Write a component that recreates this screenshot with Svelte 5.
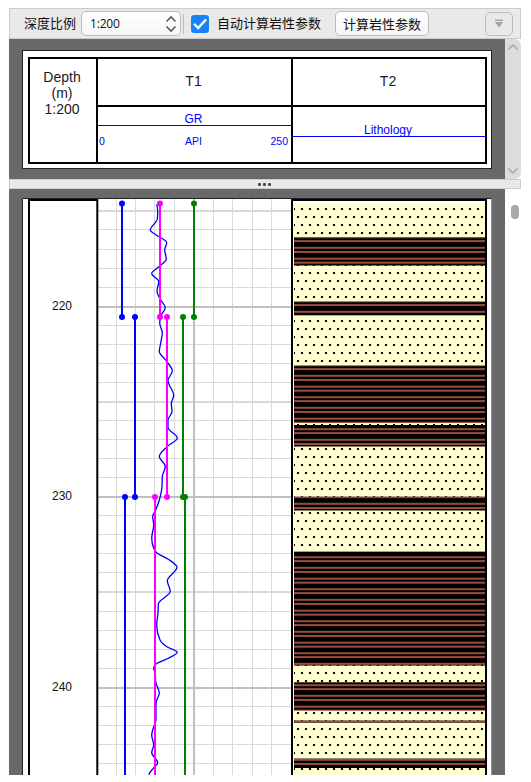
<script lang="ts">
  // Well log viewer: toolbar, track header, depth plot
  const TOP = 198;
  const BOTTOM = 775;

  let autoCalc = $state(true);

  const gridX = [116, 135, 154, 174, 213, 232, 252, 271];
  const gridY = [
    229, 249, 268, 287, 325, 344, 363, 382, 420, 439, 458, 477,
    515, 534, 553, 572, 611, 630, 649, 668, 706, 725, 744, 763,
  ];
  const midY = [210, 401, 591];
  const majors = [
    { y: 306, depth: 220 },
    { y: 496, depth: 230 },
    { y: 687, depth: 240 },
  ];

  // [top, bottom] of each shale bed, sand everywhere else
  const shale = [
    [237, 265.5],
    [301.3, 315.5],
    [365.3, 423],
    [425, 446.5],
    [496.5, 510.5],
    [551.5, 665.5],
    [682.3, 710.7],
    [720.3, 722.7],
    [758.5, 768],
  ];

  // line tops inside the 32px shale tile
  const shaleRows = [1, 7.7, 11.7, 18.2, 22.1, 28.8];

  // GR samples
  const gr = [
    [157, 204], [157.7, 212], [157.3, 219], [150.3, 230], [157, 235.5], [166.7, 242.5],
    [164.7, 250], [166.3, 259], [158.5, 267], [151.7, 273.5], [158.7, 281.5], [157, 291.5],
    [160.7, 300], [165.3, 307.5], [161, 315.5], [159.7, 323], [162.3, 333], [160.7, 343],
    [159.3, 351.5], [166, 360.5], [172.3, 371], [168, 380.5], [173.7, 395.5], [171.3, 403.5],
    [172, 411.5], [168, 420], [168, 427.5], [177.3, 438], [167.3, 446.5], [159.3, 456.5],
    [165.3, 466.5], [162.3, 476.5], [162, 486.5], [159.3, 500], [155.7, 510], [152.7, 516.5],
    [153.7, 525], [151.7, 538], [154, 549], [156.7, 552.7], [168.3, 559.3], [177, 567.3],
    [167.3, 580.7], [170.3, 591.3], [158.3, 604], [158, 613], [156.7, 625], [160, 640],
    [166.5, 646.5], [177.3, 652.3], [167.3, 658.7], [156, 664], [153.7, 668.3], [155.3, 674],
    [155.7, 681.7], [159.3, 693.3], [156.3, 701.7], [156, 708], [156, 720], [154, 726],
    [151.7, 735], [153.7, 745], [151.7, 752.7], [157.7, 762.7], [153.3, 768.3], [149, 774.7],
  ];

  // monotone in depth: no overshoot, vertical tangent at each peak
  function slope(p: number[][], i: number) {
    if (i === 0 || i === p.length - 1) return 0;
    const h0 = p[i][1] - p[i - 1][1];
    const h1 = p[i + 1][1] - p[i][1];
    const s0 = (p[i][0] - p[i - 1][0]) / h0;
    const s1 = (p[i + 1][0] - p[i][0]) / h1;
    if (s0 * s1 <= 0) return 0;
    const mean = (s0 * h1 + s1 * h0) / (h0 + h1);
    return Math.sign(s0) * Math.min(2 * Math.abs(s0), 2 * Math.abs(s1), Math.abs(mean));
  }

  function smooth(p: number[][]) {
    let d = `M${p[0]}`;
    for (let i = 0; i < p.length - 1; i++) {
      const [x0, y0] = p[i];
      const [x1, y1] = p[i + 1];
      const h = (y1 - y0) / 3;
      d += `C${x0 + slope(p, i) * h} ${y0 + h} ${x1 - slope(p, i + 1) * h} ${y1 - h} ${x1} ${y1}`;
    }
    return d;
  }

  const segments = [
    { x: 122, y1: 203.5, y2: 317, color: "#0000ff" },
    { x: 135, y1: 317, y2: 497, color: "#0000ff" },
    { x: 125, y1: 497, y2: 790, color: "#0000ff" },
    { x: 160, y1: 203.5, y2: 317, color: "#ff00ff" },
    { x: 167, y1: 317, y2: 497, color: "#ff00ff" },
    { x: 155, y1: 497, y2: 790, color: "#ff00ff" },
    { x: 194, y1: 203.5, y2: 317, color: "#008000" },
    { x: 183, y1: 317, y2: 497, color: "#008000" },
    { x: 185, y1: 497, y2: 790, color: "#008000" },
  ];
</script>

<div class="viewer">
  <div class="toolbar">
    <span class="label">深度比例</span>
    <button class="select">
      <span>1:200</span>
      <svg width="12" height="18" viewBox="0 0 12 18">
        <path d="M1.5 6.5L6 2L10.5 6.5M1.5 11.5L6 16L10.5 11.5" />
      </svg>
    </button>
    <i class="sep"></i>
    <button class="check" aria-label="toggle" onclick={() => (autoCalc = !autoCalc)}>
      {#if autoCalc}
        <svg width="18" height="18" viewBox="0 0 18 18"><path d="M3 8.8L7.2 13L15 4.5" /></svg>
      {/if}
    </button>
    <span class="label auto">自动计算岩性参数</span>
    <button class="calc">计算岩性参数</button>
    <button class="more" aria-label="more">
      <svg width="10" height="10" viewBox="0 0 10 10"><path d="M1 .5H9V2H1ZM1 3H9L5 8.5Z" /></svg>
    </button>
  </div>

  <div class="head">
    <div class="dark">
      <div class="sheet">
        <div class="tracks">
          <div class="depth">Depth<br />(m)<br />1:200</div>
          <div class="track t1">
            <div class="title">T1</div>
            <div class="curve">GR</div>
            <div class="range"><span>0</span><span>API</span><span>250</span></div>
          </div>
          <div class="track t2">
            <div class="title">T2</div>
            <div class="curve">Lithology</div>
          </div>
        </div>
      </div>
    </div>
    <div class="scroll">
      <svg width="10" height="6" viewBox="0 0 10 6"><path d="M.5 5.5L5 1L9.5 5.5" /></svg>
      <svg width="10" height="6" viewBox="0 0 10 6"><path d="M.5 .5L5 5L9.5 .5" /></svg>
    </div>
  </div>

  <div class="splitter"><i></i><i></i><i></i></div>

  <div class="body">
    <svg class="plot" width="496" height="586" viewBox="9 189 496 586">
      <defs>
        <pattern id="sand" width="8" height="16" patternUnits="userSpaceOnUse">
          <rect width="8" height="16" fill="#ffffd2" />
          <rect x="5" y="0" width="2" height="2" />
          <rect x="1" y="8" width="2" height="2" />
        </pattern>
        <pattern id="shale" y="570" width="8" height="32" patternUnits="userSpaceOnUse">
          <rect width="8" height="32" />
          {#each shaleRows as y}
            <rect {y} width="8" height="2" fill="#984d3c" />
          {/each}
        </pattern>
      </defs>

      <rect x="22" y={TOP} width="470.5" height="600" fill="#fff" />
      <path d="M22.5 790V198.5H492V790" class="edge" />

      <g shape-rendering="crispEdges">
        {#each gridX as x}
          <rect {x} y="199" width="1" height="576" fill="#dadada" />
        {/each}
        {#each gridY as y}
          <rect x="98" {y} width="193" height="1" fill="#dadada" />
        {/each}
        {#each midY as y}
          <rect x="98" {y} width="193" height="2" fill="#d8d8d8" />
        {/each}
        <rect x="193" y="199" width="2" height="576" fill="#c0c0c0" />
        {#each majors as m}
          <rect x="98" y={m.y} width="193" height="2" fill="#c0c0c0" />
        {/each}
      </g>

      <rect x="294" y="203.5" width="191.5" height={BOTTOM - 203} fill="url(#sand)" />
      {#each shale as [y1, y2]}
        <rect x="294" y={y1} width="191.5" height={y2 - y1} fill="url(#shale)" />
      {/each}

      <path d="M29 790V200H97.3V790M292 790V200H486V790" class="frame" />

      <path d={smooth(gr)} class="gr" />
      {#each segments as s}
        <rect x={s.x - 1} y={s.y1} width="2" height={s.y2 - s.y1} fill={s.color} />
        <circle cx={s.x} cy={s.y1} r="3" fill={s.color} />
        <circle cx={s.x} cy={s.y2} r="3" fill={s.color} />
      {/each}

      {#each majors as m}
        <text x="62" y={m.y + 4} class="tick">{m.depth}</text>
      {/each}
    </svg>
    <div class="vbar"><i></i></div>
  </div>
</div>

<style>
  :global(body) {
    background: #fff;
  }
  .viewer {
    box-sizing: border-box;
    width: 531px;
    height: 782px;
    padding: 8px 10px 7px 9px;
    overflow: hidden;
    font-family: "Liberation Sans", "Noto Sans CJK SC", sans-serif;
    color: #1a1a1a;
  }
  .toolbar {
    box-sizing: border-box;
    display: flex;
    align-items: center;
    width: 512px;
    height: 31px;
    padding-left: 14px;
    padding-right: 7px;
    background: #e9e9e9;
    border: 1px solid #ccc;
  }
  .label,
  .calc,
  .select {
    font: 13px/18px "Noto Sans CJK SC", sans-serif;
    white-space: nowrap;
    color: #111;
  }
  .label {
    padding-bottom: 1px;
  }
  button {
    box-sizing: border-box;
    margin: 0;
    padding: 0;
    border: 1px solid #bdbdbd;
    border-radius: 5px;
    background: linear-gradient(#fff, #f5f5f5);
  }
  .select {
    display: flex;
    align-items: center;
    justify-content: space-between;
    width: 100px;
    height: 25px;
    margin-left: 5px;
    padding: 0 3px 0 8px;
  }
  .select span {
    font-family: "Open Sans", sans-serif;
    font-size: 12px;
    letter-spacing: -0.2px;
  }
  .select path {
    fill: none;
    stroke: #606060;
    stroke-width: 1.7;
  }
  .sep {
    width: 1px;
    height: 20px;
    margin-left: 2px;
    background: #bbb;
  }
  .check {
    width: 18px;
    height: 18px;
    margin-left: 7px;
    border: 0;
    border-radius: 3px;
    background: #1a82f7;
  }
  .check svg {
    display: block;
  }
  .check path {
    fill: none;
    stroke: #fff;
    stroke-width: 2.4;
  }
  .auto {
    margin-left: 8px;
  }
  .calc {
    width: 94px;
    height: 25px;
    margin-left: 14px;
  }
  .more {
    display: flex;
    align-items: center;
    justify-content: center;
    width: 28px;
    height: 24px;
    margin-left: auto;
    background: #e9e9e9;
  }
  .more path {
    fill: #a2a2a2;
  }
  .head {
    display: flex;
    width: 512px;
    height: 140px;
  }
  .dark {
    box-sizing: border-box;
    width: 496px;
    height: 140px;
    padding: 11px 13px;
    background: #696969;
  }
  .sheet {
    box-sizing: border-box;
    width: 470px;
    height: 119px;
    padding: 6px 4px 4px 5px;
    border: 1px solid #222;
    background: #fff;
  }
  .tracks {
    box-sizing: border-box;
    display: flex;
    width: 459px;
    height: 107px;
    border: 2px solid #000;
  }
  .depth {
    box-sizing: border-box;
    width: 66px;
    padding: 10px 2px 0 0;
    font-size: 14px;
    line-height: 16px;
    text-align: center;
  }
  .track {
    border-left: 2px solid #000;
    text-align: center;
  }
  .t1 {
    width: 193px;
  }
  .t2 {
    width: 192px;
  }
  .title {
    height: 46px;
    padding-right: 2px;
    border-bottom: 2px solid #000;
    font-size: 14px;
    line-height: 44px;
  }
  .curve {
    height: 18px;
    padding-right: 2px;
    border-bottom: 1px solid #0000ff;
    font-size: 12px;
    line-height: 24px;
    color: #0000ff;
  }
  .t2 .curve {
    height: 29px;
    line-height: 47px;
  }
  .range {
    display: grid;
    grid-template-columns: 1fr auto 1fr;
    padding: 7px 3px 0 1px;
    font-size: 10.5px;
    line-height: 16px;
    color: #0000ff;
  }
  .range span:first-child {
    text-align: left;
  }
  .range span:last-child {
    text-align: right;
  }
  .scroll {
    box-sizing: border-box;
    display: flex;
    flex-direction: column;
    align-items: center;
    justify-content: space-between;
    width: 16px;
    height: 140px;
    padding: 5px 0;
    border-radius: 0 6px 6px 0;
    background: #dcdcdc;
  }
  .scroll path {
    fill: none;
    stroke: #aaa;
    stroke-width: 1.6;
  }
  .splitter {
    box-sizing: border-box;
    display: flex;
    align-items: center;
    justify-content: center;
    gap: 2px;
    width: 512px;
    height: 10px;
    padding-right: 1px;
    border: 1px solid #ccc;
    background: #e9e9e9;
  }
  .splitter i {
    width: 3px;
    height: 3px;
    border-radius: 1px;
    background: #484848;
  }
  .body {
    display: flex;
    height: 586px;
  }
  .plot {
    display: block;
    background: #696969;
  }
  .edge {
    fill: none;
    stroke: #222;
  }
  .frame {
    fill: none;
    stroke: #000;
    stroke-width: 2;
  }
  .gr {
    fill: none;
    stroke: #0000ff;
    stroke-width: 1.3;
  }
  .tick {
    font-size: 12px;
    text-anchor: middle;
    fill: #111;
  }
  .vbar {
    width: 16px;
    padding-top: 16px;
  }
  .vbar i {
    display: block;
    width: 8px;
    height: 14px;
    margin-left: 6px;
    border-radius: 4px;
    background: #a8a8a8;
  }
</style>
